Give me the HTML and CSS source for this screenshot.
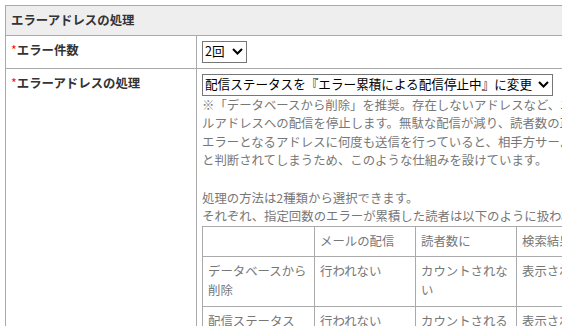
FILE: index.html
```html
<!DOCTYPE html>
<html lang="ja">
<head>
<meta charset="utf-8">
<link rel="stylesheet" href="styles.css">
</head>
<body>
<table class="form">
  <colgroup><col class="c-label"><col class="c-field"></colgroup>
  <tr><th class="head" colspan="2">エラーアドレスの処理</th></tr>
  <tr>
    <td class="label"><span class="req">*</span>エラー件数</td>
    <td class="field">
      <span class="select sel-small"><span class="sel-text">2回</span><svg class="chev" width="11" height="7" viewBox="0 0 11 7"><path d="M1 1 L5.5 5.5 L10 1" fill="none" stroke="#000" stroke-width="2"/></svg></span>
    </td>
  </tr>
  <tr>
    <td class="label"><span class="req">*</span>エラーアドレスの処理</td>
    <td class="field">
      <span class="select sel-wide"><span class="sel-text">配信ステータスを『エラー累積による配信停止中』に変更</span><svg class="chev" width="11" height="7" viewBox="0 0 11 7"><path d="M1 1 L5.5 5.5 L10 1" fill="none" stroke="#000" stroke-width="2"/></svg></span>
      <p class="note">※「データベースから削除」を推奨。存在しないアドレスなど、エラーが続くメー<br>ルアドレスへの配信を停止します。無駄な配信が減り、読者数の正確な把握にも<br>エラーとなるアドレスに何度も送信を行っていると、相手方サーバーから迷惑メール<br>と判断されてしまうため、このような仕組みを設けています。</p>
      <p class="note">処理の方法は2種類から選択できます。<br>それぞれ、指定回数のエラーが累積した読者は以下のように扱われます。</p>
      <table class="inner">
        <colgroup><col class="i1"><col class="i2"><col class="i3"><col class="i4"></colgroup>
        <tr><td></td><td>メールの配信</td><td>読者数に</td><td>検索結果に</td></tr>
        <tr><td>データベースから削除</td><td>行われない</td><td>カウントされない</td><td>表示されない</td></tr>
        <tr><td>配信ステータス『エラー累積による配信停止中』に変更</td><td>行われない</td><td>カウントされる</td><td>表示される</td></tr>
      </table>
    </td>
  </tr>
</table>
</body>
</html>
```

FILE: styles.css
```css
html { overflow: hidden; }
body {
  margin: 5px 0 0 5px;
  font-family: "Noto Sans CJK JP", "Noto Sans", sans-serif;
  font-size: 12.4px;
  line-height: 1.5;
  color: #333;
}
.form {
  border-collapse: collapse;
  table-layout: fixed;
  width: 900px;
}
.c-label { width: 191px; }
.form th, .form > tbody > tr > td, .form > tr > td {
  border: 1px solid #aaa;
  padding: 5px;
  vertical-align: top;
  text-align: left;
}
.head {
  background: #eeeeee;
  font-weight: bold;
}
.label { font-weight: bold; color: #333; }
.req { color: #f00; font-weight: normal; }
.select {
  display: inline-flex;
  align-items: center;
  box-sizing: border-box;
  height: 22px;
  border: 1px solid #767676;
  background: #fff;
  color: #000;
  padding: 0 3px 0 2px;
  vertical-align: top;
}
.sel-small { width: 45px; }
.sel-wide { width: 351px; }
.sel-text { flex: 1; white-space: nowrap; font-size: 12.6px; }
.chev { flex: none; margin-left: 4px; }
.note {
  margin: 0;
  color: #777;
  white-space: nowrap;
}
.note + .note { margin-top: 18.6px; }
.inner {
  border-collapse: collapse;
  table-layout: fixed;
  width: 520px;
  color: #777;
}
.i1 { width: 112px; }
.i2 { width: 101px; }
.i3 { width: 101px; }
.i4 { width: 206px; }
.inner td {
  border: 1px solid #aaa;
  padding: 5px 5px 6px;
  vertical-align: top;
  height: 18.6px;
}
```
